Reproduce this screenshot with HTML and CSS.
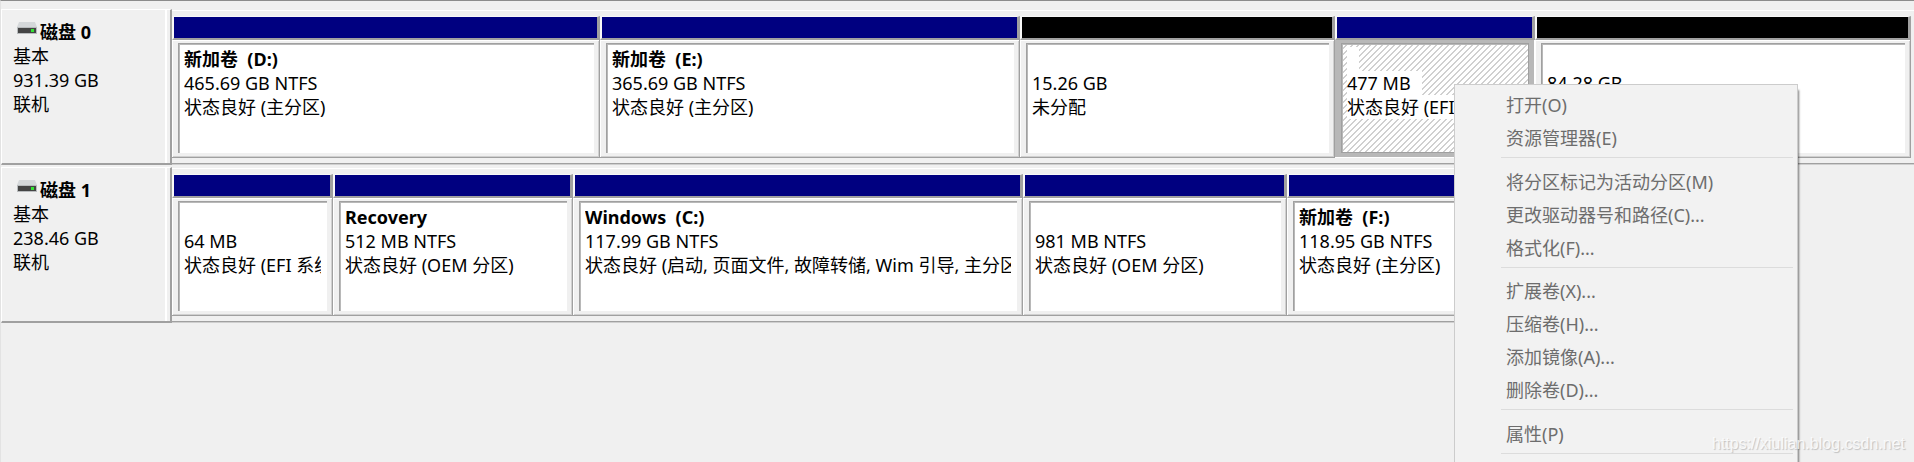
FILE: index.html
```
<!DOCTYPE html>
<html lang="zh-CN">
<head>
    <meta charset="UTF-8">
    <title>磁盘管理</title>
    <link rel="stylesheet" href="styles.css">
</head>
<body>
    <div class="disk">
        <div class="disk-label">
            <div class="disk-name">
                <svg class="disk-icon" width="20" height="12" viewBox="0 0 20 12">
                    <path d="M2 0h16l2 5H0z" fill="#d5d8da"/>
                    <rect x="0" y="5" width="20" height="7" fill="#b9bcbe"/>
                    <rect x="1" y="6" width="18" height="5" fill="#454545"/>
                    <rect x="14" y="7" width="3" height="3" fill="#35e435"/>
                </svg>
                <b>磁盘 0</b>
            </div>
            <div>基本</div>
            <div>931.39 GB</div>
            <div>联机</div>
        </div>
        <div class="volumes row-0">
            <div class="volume">
                <div class="bar"></div>
                <div class="body"><div class="box"><b>新加卷&nbsp; (D:)</b><p>465.69 GB NTFS</p><p>状态良好 (主分区)</p></div></div>
            </div>
            <div class="volume">
                <div class="bar"></div>
                <div class="body"><div class="box"><b>新加卷&nbsp; (E:)</b><p>365.69 GB NTFS</p><p>状态良好 (主分区)</p></div></div>
            </div>
            <div class="volume free">
                <div class="bar"></div>
                <div class="body"><div class="box"><b></b><p>15.26 GB</p><p>未分配</p></div></div>
            </div>
            <div class="volume selected">
                <div class="bar"></div>
                <div class="body"><div class="box"><b></b><p>477 MB</p><p>状态良好 (EFI</p></div></div>
            </div>
            <div class="volume free">
                <div class="bar"></div>
                <div class="body"><div class="box"><b></b><p>84.28 GB</p></div></div>
            </div>
        </div>
    </div>

    <div class="disk">
        <div class="disk-label">
            <div class="disk-name">
                <svg class="disk-icon" width="20" height="12" viewBox="0 0 20 12">
                    <path d="M2 0h16l2 5H0z" fill="#d5d8da"/>
                    <rect x="0" y="5" width="20" height="7" fill="#b9bcbe"/>
                    <rect x="1" y="6" width="18" height="5" fill="#454545"/>
                    <rect x="14" y="7" width="3" height="3" fill="#35e435"/>
                </svg>
                <b>磁盘 1</b>
            </div>
            <div>基本</div>
            <div>238.46 GB</div>
            <div>联机</div>
        </div>
        <div class="volumes row-1">
            <div class="volume">
                <div class="bar"></div>
                <div class="body"><div class="box"><b></b><p>64 MB</p><p>状态良好 (EFI 系统</p></div></div>
            </div>
            <div class="volume">
                <div class="bar"></div>
                <div class="body"><div class="box"><b>Recovery</b><p>512 MB NTFS</p><p>状态良好 (OEM 分区)</p></div></div>
            </div>
            <div class="volume">
                <div class="bar"></div>
                <div class="body"><div class="box"><b>Windows&nbsp; (C:)</b><p>117.99 GB NTFS</p><p>状态良好 (启动, 页面文件, 故障转储, Wim 引导, 主分区</p></div></div>
            </div>
            <div class="volume">
                <div class="bar"></div>
                <div class="body"><div class="box"><b></b><p>981 MB NTFS</p><p>状态良好 (OEM 分区)</p></div></div>
            </div>
            <div class="volume">
                <div class="bar"></div>
                <div class="body"><div class="box"><b>新加卷&nbsp; (F:)</b><p>118.95 GB NTFS</p><p>状态良好 (主分区)</p></div></div>
            </div>
        </div>
    </div>

    <ul class="menu">
        <li>打开(O)</li>
        <li>资源管理器(E)</li>
        <li class="sep"></li>
        <li>将分区标记为活动分区(M)</li>
        <li>更改驱动器号和路径(C)...</li>
        <li>格式化(F)...</li>
        <li class="sep"></li>
        <li>扩展卷(X)...</li>
        <li>压缩卷(H)...</li>
        <li>添加镜像(A)...</li>
        <li>删除卷(D)...</li>
        <li class="sep"></li>
        <li>属性(P)</li>
        <li class="sep"></li>
    </ul>

    <div class="watermark">https://xiulian.blog.csdn.net</div>
</body>
</html>
```
FILE: styles.css
```
* {
    box-sizing: border-box;
}
body {
    margin: 0;
    height: 462px;
    padding-top: 8px;
    position: relative;
    overflow: hidden;
    background: #f0f0f0;
    border-top: 1px solid #8c8c8c;
    border-left: 1px solid #e3e3e3;
    font-family: "Noto Sans", "Noto Sans CJK SC", sans-serif;
    font-size: 18px;
    line-height: 24px;
    color: #000;
}
p {
    margin: 0;
}

/* disk rows */
.disk {
    display: flex;
    height: 157px;
}
.disk + .disk {
    margin-top: 1px;
}
.disk-label {
    width: 171px;
    height: 156px;
    padding: 10px 0 0 11px;
    border: 1px solid #fff;
    border-right: 2px solid #a0a0a0;
    border-bottom: 2px solid #a0a0a0;
    box-shadow: inset -3px 0 0 #f0f0f0, inset -5px 0 0 #fff;
}
.disk-name {
    display: flex;
}
.disk-icon {
    margin: 2px 3px 0 4px;
}
.volumes {
    flex: 1;
    display: grid;
    height: 154px;
    margin-top: 1px;
    padding: 5px 0 5px;
    border-top: 1px solid #fff;
    border-bottom: 1px solid #a0a0a0;
    box-shadow: 0 1px 0 #cfcfcf;
}
.row-0 {
    grid-template-columns: 428px 420px 315px 200px 376px;
}
.row-1 {
    flex: none;
    grid-template-columns: 161px 240px 450px 264px 252px;
}

/* volumes */
.volume {
    display: flex;
    flex-direction: column;
    min-width: 0;
}
.bar {
    height: 24px;
    background: #000080;
    border: 1px solid #f8f8f8;
    border-left-width: 2px;
    border-right: 3px solid #a0a0a0;
    border-bottom: 2px solid #a0a0a0;
}
.free .bar {
    background: #000;
}
.body {
    flex: 1;
    min-height: 0;
    padding: 3px 5px 4px 6px;
    border-right: 1px solid #a0a0a0;
    border-bottom: 1px solid #a0a0a0;
    box-shadow: inset 1px 1px 0 #fff, inset -1px -1px 0 #d0d0d0;
}
.box {
    height: 110px;
    padding: 3px 6px 0 5px;
    background: #fff;
    border-top: 1px solid #a0a0a0;
    border-left: 1px solid #a0a0a0;
    box-shadow: inset 1px 1px 0 #b8b8b8;
    overflow: hidden;
    white-space: nowrap;
}
.box b,
.box p {
    display: block;
    height: 24px;
    overflow: hidden;
}
.selected .body {
    background: #b8b8b8;
    box-shadow: none;
    border-color: #fff;
}
.selected .box {
    border: 1px solid #a0a0a0;
    background: repeating-linear-gradient(135deg, #fff 0, #fff 3.2px, #d0d0d0 3.2px, #d0d0d0 4.243px);
}
.selected .box b,
.selected .box p {
    width: fit-content;
    background: #fff;
}
.selected .box b {
    width: 12px;
}
.selected .box p {
    padding-right: 11px;
}

/* context menu */
.menu {
    position: absolute;
    left: 1453px;
    top: 83px;
    width: 344px;
    height: 400px;
    margin: 0;
    padding: 4px 4px 0 46px;
    list-style: none;
    background: #f2f2f2;
    border: 1px solid #ccc;
    box-shadow: 2px 5px 2px -1px rgba(0, 0, 0, 0.5);
    color: #6d6d6d;
}
.menu li {
    height: 33px;
    padding-left: 5px;
    line-height: 33px;
}
.menu .sep {
    height: 1px;
    margin: 2px 0 7.5px;
    background: #dcdcdc;
}

.watermark {
    position: absolute;
    right: 9px;
    bottom: 6px;
    font-family: "Liberation Sans", Arial, sans-serif;
    font-size: 16px;
    color: rgba(255, 255, 255, 0.8);
    text-shadow: 1px 1px 1px rgba(0, 0, 0, 0.2);
}
```
